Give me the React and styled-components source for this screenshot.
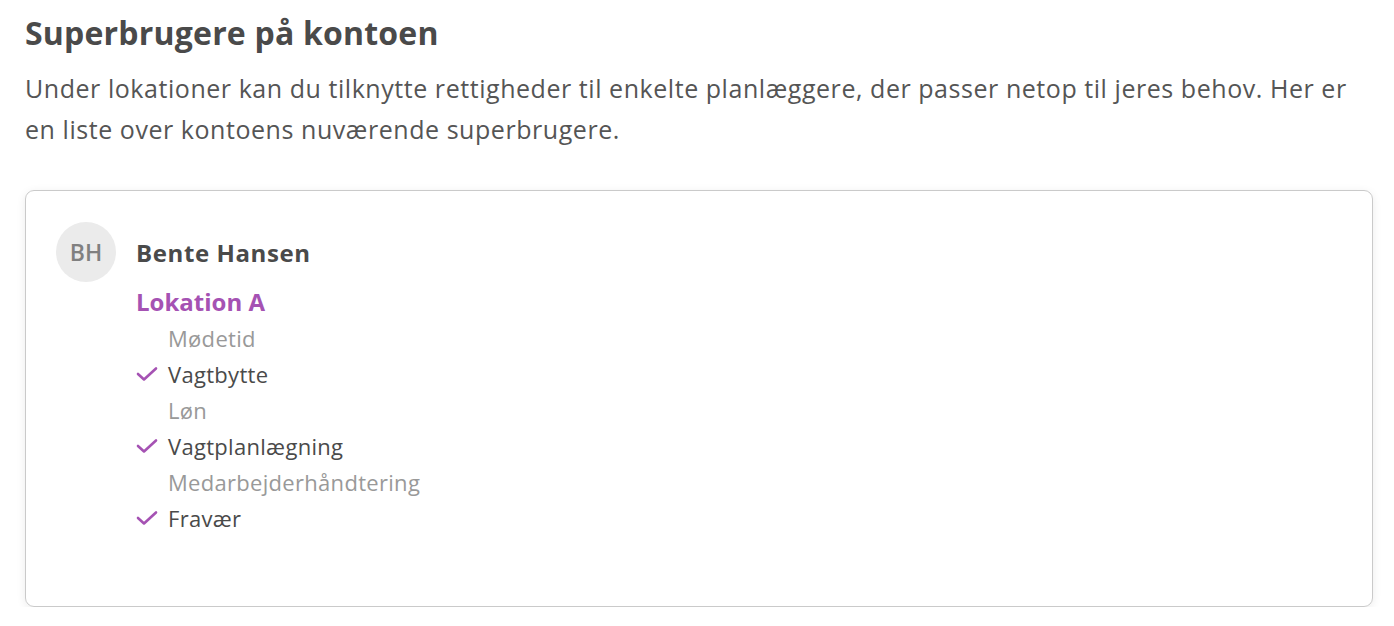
import styled, { createGlobalStyle } from 'styled-components'

const GlobalStyle = createGlobalStyle`
  body {
    margin: 0;
    background: #ffffff;
    font-family: "Open Sans", "Noto Sans", sans-serif;
    -webkit-font-smoothing: antialiased;
  }
`

const permissions = [
  { label: 'Mødetid', granted: false },
  { label: 'Vagtbytte', granted: true },
  { label: 'Løn', granted: false },
  { label: 'Vagtplanlægning', granted: true },
  { label: 'Medarbejderhåndtering', granted: false },
  { label: 'Fravær', granted: true },
]

const Check = () => (
  <svg width="22" height="16" viewBox="0 0 22 16" fill="none">
    <path
      d="M2 8 L8 13.5 L20 2.5"
      stroke="#a552b3"
      strokeWidth="2.6"
      strokeLinecap="round"
      strokeLinejoin="round"
    />
  </svg>
)

const App = () => {
  return (
    <>
      <GlobalStyle />
      <Page>
        <Title>Superbrugere på kontoen</Title>
        <Intro>
          Under lokationer kan du tilknytte rettigheder til enkelte planlæggere, der passer netop til jeres behov. Her er
          en liste over kontoens nuværende superbrugere.
        </Intro>
        <Card>
          <Avatar>BH</Avatar>
          <UserInfo>
            <UserName>Bente Hansen</UserName>
            <Location>Lokation A</Location>
            <PermissionList>
              {permissions.map((p) => (
                <Permission key={p.label} $granted={p.granted}>
                  <CheckSlot>{p.granted && <Check />}</CheckSlot>
                  {p.label}
                </Permission>
              ))}
            </PermissionList>
          </UserInfo>
        </Card>
      </Page>
    </>
  )
}

export default App

const Page = styled.div`
  padding: 13px 21px 0 25px;
  box-sizing: border-box;
  width: 1394px;
`

const Title = styled.h1`
  margin: 0;
  font-size: 32px;
  line-height: 40px;
  font-weight: 700;
  color: #4a4a4a;
  letter-spacing: 0.2px;
`

const Intro = styled.p`
  margin: 15px 0 0;
  max-width: 1362px;
  font-size: 25px;
  line-height: 41px;
  letter-spacing: 0.55px;
  color: #555555;
`

const Card = styled.div`
  margin-top: 40px;
  height: 417px;
  box-sizing: border-box;
  border: 1px solid #cacaca;
  border-radius: 9px;
  box-shadow: 0 2px 10px rgba(0, 0, 0, 0.08);
  padding: 31px 30px;
  display: flex;
  gap: 20px;
`

const Avatar = styled.div`
  width: 60px;
  height: 60px;
  border-radius: 50%;
  background: #ebebeb;
  color: #808080;
  font-size: 23px;
  font-weight: 600;
  display: flex;
  align-items: center;
  justify-content: center;
  flex-shrink: 0;
`

const UserInfo = styled.div`
  display: flex;
  flex-direction: column;
  padding-top: 16px;
`

const UserName = styled.div`
  font-size: 24px;
  line-height: 30px;
  font-weight: 700;
  letter-spacing: 0.6px;
  color: #4a4a4a;
`

const Location = styled.div`
  margin-top: 19px;
  font-size: 24px;
  line-height: 30px;
  font-weight: 700;
  color: #a552b3;
`

const PermissionList = styled.ul`
  list-style: none;
  margin: 3px 0 0;
  padding: 0;
`

const Permission = styled.li`
  display: flex;
  align-items: center;
  height: 36px;
  font-size: 22px;
  letter-spacing: 0.3px;
  color: ${({ $granted }) => ($granted ? '#4a4a4a' : '#999999')};
`

const CheckSlot = styled.span`
  width: 32px;
  display: flex;
  align-items: center;
`
